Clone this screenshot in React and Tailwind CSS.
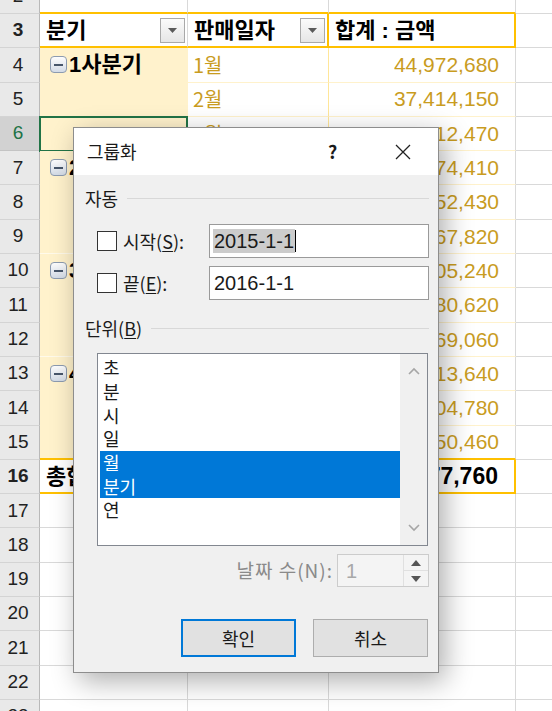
const SHEET_FONT = { fontFamily: '"Liberation Sans", "Noto Sans CJK KR", sans-serif' }
const DLG_FONT = { fontFamily: '"Noto Sans CJK KR", "Noto Sans", sans-serif' }

const rows = [
  { n: 4, q: '1사분기', m: '1월', v: '44,972,680' },
  { n: 5, m: '2월', v: '37,414,150' },
  { n: 6, m: '3월', v: '41,912,470', end: true },
  { n: 7, q: '2사분기', m: '4월', v: '43,574,410' },
  { n: 8, m: '5월', v: '39,252,430' },
  { n: 9, m: '6월', v: '40,867,820', end: true },
  { n: 10, q: '3사분기', m: '7월', v: '42,105,240' },
  { n: 11, m: '8월', v: '38,680,620' },
  { n: 12, m: '9월', v: '41,769,060', end: true },
  { n: 13, q: '4사분기', m: '10월', v: '45,213,640' },
  { n: 14, m: '11월', v: '36,904,780' },
  { n: 15, m: '12월', v: '40,250,460', end: true },
]

function RowHead({ n, active }) {
  return (
    <div
      className={
        'w-[40px] shrink-0 flex items-center justify-center pr-[3px] border-r border-b text-[19px] ' +
        (active
          ? 'bg-[#d2d2d2] border-r-[#217346] border-b-[#c4c4c4] text-[#217346]'
          : 'bg-[#e9e9e9] border-r-[#b9b9b9] border-b-[#d4d4d4] text-[#222]')
      }
    >
      {n}
    </div>
  )
}

function Dropdown() {
  return (
    <div className="ml-auto mr-[2px] w-[25px] h-[25px] border border-[#a9a9a9] bg-gradient-to-b from-[#fbfbfb] to-[#e6e6e6] flex items-center justify-center">
      <svg width="9" height="5" viewBox="0 0 9 5">
        <path d="M0 0h9L4.5 5z" fill="#5a5a5a" />
      </svg>
    </div>
  )
}

function Collapse() {
  return (
    <div className="w-[17px] h-[17px] shrink-0 rounded-[4px] border border-[#8c9bb0] bg-gradient-to-b from-[#fdfdfd] to-[#d3dbe6] flex items-center justify-center">
      <div className="w-[9px] h-[2px] bg-[#47566a]" />
    </div>
  )
}

function EmptyRow({ n }) {
  return (
    <div className="flex h-[34.3px]">
      <RowHead n={n} />
      <div className="w-[148px] shrink-0 border-r border-b border-[#d9d9d9]" />
      <div className="w-[141px] shrink-0 border-r border-b border-[#d9d9d9]" />
      <div className="w-[187px] shrink-0 border-r border-b border-[#d9d9d9]" />
      <div className="flex-1 border-b border-[#d9d9d9]" />
    </div>
  )
}

function Sheet() {
  return (
    <div className="flex flex-col mt-[-20.3px] text-[21px]" style={SHEET_FONT}>
      {/* row 2 */}
      <div className="flex h-[34.3px]">
        <RowHead n={2} />
        <div className="w-[148px] shrink-0 border-r border-r-[#d9d9d9] border-b-2 border-b-[#ffc000]" />
        <div className="w-[141px] shrink-0 border-r border-r-[#d9d9d9] border-b-2 border-b-[#ffc000]" />
        <div className="w-[187px] shrink-0 border-r border-r-[#d9d9d9] border-b-2 border-b-[#ffc000]" />
        <div className="flex-1 border-b border-[#d9d9d9]" />
      </div>
      {/* row 3 header */}
      <div className="flex h-[34.3px] font-bold text-[22px]">
        <RowHead n={3} />
        <div className="w-[148px] shrink-0 flex items-center pl-[6px] border-r border-r-[#d9d9d9] border-b-2 border-b-[#ffc000]">
          분기
          <Dropdown />
        </div>
        <div className="w-[141px] shrink-0 flex items-center pl-[6px] border-r-2 border-r-[#ffc000] border-b-2 border-b-[#ffc000]">
          판매일자
          <Dropdown />
        </div>
        <div className="w-[187px] shrink-0 flex items-center pl-[6px] border-r-2 border-r-[#ffc000] border-b-2 border-b-[#ffc000]">
          합계 : 금액
        </div>
        <div className="flex-1 border-b border-[#d9d9d9]" />
      </div>
      {rows.map((r) => (
        <div key={r.n} className="flex h-[34.3px]">
          <RowHead n={r.n} active={r.n === 6} />
          <div
            className={
              'relative w-[148px] shrink-0 bg-[#fff2cc] flex items-center pl-[10px] gap-[2px] font-bold text-[22px] border-r border-r-[#fff2cc] ' +
              (r.n === 15
                ? 'border-b-2 border-b-[#ffc000]'
                : r.end
                ? 'border-b border-b-[#fffaea]'
                : 'border-b border-b-[#fff2cc]')
            }
          >
            {r.q ? (
              <>
                <Collapse />
                <span>{r.q}</span>
              </>
            ) : null}
            {r.n === 6 ? (
              <div className="absolute left-[-1px] top-[-1px] right-[-1px] bottom-[-2px] border-2 border-[#217346]" />
            ) : null}
          </div>
          <div
            className={
              'w-[141px] shrink-0 flex items-center pl-[5px] text-[#c99c1f] border-r border-r-[#ffe699] ' +
              (r.n === 15 ? 'border-b-2 border-b-[#ffc000]' : 'border-b border-b-[#fff2cc]')
            }
            style={{ fontFamily: '"Noto Sans CJK KR", sans-serif', fontSize: '20px' }}
          >
            {r.m}
          </div>
          <div
            className={
              'w-[187px] shrink-0 flex items-center justify-end pr-[16px] text-[#c99c1f] border-r border-r-[#d9d9d9] ' +
              (r.n === 15 ? 'border-b-2 border-b-[#ffc000]' : 'border-b border-b-[#fff2cc]')
            }
          >
            {r.v}
          </div>
          <div className="flex-1 border-b border-[#d9d9d9]" />
        </div>
      ))}
      {/* row 16 total */}
      <div className="flex h-[34.3px] font-bold">
        <RowHead n={16} />
        <div className="w-[148px] shrink-0 flex items-center pl-[6px] text-[22px] border-b-2 border-b-[#ffc000]">
          총합계
        </div>
        <div className="w-[141px] shrink-0 border-r-2 border-r-[#ffc000] border-b-2 border-b-[#ffc000]" />
        <div className="w-[187px] shrink-0 flex items-center justify-end pr-[16px] text-[23px] border-r-2 border-r-[#ffc000] border-b-2 border-b-[#ffc000]">
          491,177,760
        </div>
        <div className="flex-1 border-b border-[#d9d9d9]" />
      </div>
      {[17, 18, 19, 20, 21, 22, 23].map((n) => (
        <EmptyRow key={n} n={n} />
      ))}
    </div>
  )
}

function Checkbox() {
  return <div className="w-[20px] h-[20px] shrink-0 border border-[#333] bg-white" />
}

function Chevron({ up }) {
  return (
    <svg width="12" height="8" viewBox="0 0 12 8">
      <path
        d={up ? 'M1 7L6 2l5 5' : 'M1 1l5 5 5-5'}
        fill="none"
        stroke="#a6a6a6"
        strokeWidth="1.6"
      />
    </svg>
  )
}

function Dialog() {
  const units = ['초', '분', '시', '일', '월', '분기', '연']
  return (
    <div
      className="absolute left-[73px] top-[127px] w-[366px] h-[546px] border border-[#8d8d8d] bg-[#f0f0f0] flex flex-col text-[18px] text-[#1a1a1a] shadow-[6px_8px_26px_rgba(0,0,0,0.32)]"
      style={DLG_FONT}
    >
      <div className="relative h-[47px] bg-white flex items-center pl-[13px]">
        <span>그룹화</span>
        <span className="absolute left-[254px] top-[10px] font-bold text-[18px]">?</span>
        <svg className="absolute left-[321px] top-[16px]" width="16" height="16" viewBox="0 0 16 16">
          <path d="M1 1l14 14M15 1L1 15" stroke="#222" strokeWidth="1.3" />
        </svg>
      </div>
      <div className="flex flex-col pl-[11px] pr-[9px]">
        <div className="mt-[11px] h-[24px] flex items-center">
          <span>자동</span>
          <div className="ml-[9px] flex-1 h-px bg-[#d8d8d8]" />
        </div>
        <div className="mt-[14px] h-[34px] flex items-center pl-[12px]">
          <Checkbox />
          <span className="ml-[6px]">
            시작(<span className="underline underline-offset-2">S</span>):
          </span>
          <div className="ml-auto w-[220px] h-[34px] border border-[#9a9a9a] bg-white flex items-center pl-[3px] text-[20px]" style={SHEET_FONT}>
            <span className="bg-[#cccccc] px-[1px] leading-[24px]">2015-1-1</span>
            <span className="w-px h-[22px] bg-black" />
          </div>
        </div>
        <div className="mt-[8px] h-[34px] flex items-center pl-[12px]">
          <Checkbox />
          <span className="ml-[6px]">
            끝(<span className="underline underline-offset-2">E</span>):
          </span>
          <div className="ml-auto w-[220px] h-[34px] border border-[#9a9a9a] bg-white flex items-center pl-[4px] text-[20px]" style={SHEET_FONT}>
            2016-1-1
          </div>
        </div>
        <div className="mt-[16px] h-[24px] flex items-center">
          <span>
            단위(<span className="underline underline-offset-2">B</span>)
          </span>
          <div className="ml-[9px] flex-1 h-px bg-[#d8d8d8]" />
        </div>
        <div className="mt-[13px] ml-[12px] w-[331px] h-[193px] border border-[#828790] bg-white flex">
          <div className="flex-1 pt-[2px] pl-[2px]">
            {units.map((u) => {
              const sel = u === '월' || u === '분기'
              return (
                <div
                  key={u}
                  className={'h-[23.7px] flex items-center pl-[3px] ' + (sel ? 'bg-[#0078d7] text-white' : '')}
                >
                  {u}
                </div>
              )
            })}
          </div>
          <div className="w-[27px] bg-[#f0f0f0] flex flex-col items-center justify-between py-[13px]">
            <Chevron up />
            <Chevron />
          </div>
        </div>
        <div className="mt-[8px] h-[33px] flex items-center justify-end gap-[4px]">
          <span className="text-[#8a8a8a] text-[19px] tracking-[1px]">날짜 수(N):</span>
          <div className="w-[92px] h-[33px] border border-[#cccccc] bg-[#f4f4f4] flex">
            <div className="flex-1 flex items-center pl-[8px] text-[20px] text-[#a8a8a8]" style={SHEET_FONT}>
              1
            </div>
            <div className="w-[25px] flex flex-col border-l border-[#e0e0e0]">
              <div className="flex-1 flex items-center justify-center border-b border-[#e0e0e0]">
                <svg width="10" height="6" viewBox="0 0 10 6">
                  <path d="M0 6L5 0l5 6z" fill="#555" />
                </svg>
              </div>
              <div className="flex-1 flex items-center justify-center">
                <svg width="10" height="6" viewBox="0 0 10 6">
                  <path d="M0 0h10L5 6z" fill="#555" />
                </svg>
              </div>
            </div>
          </div>
        </div>
        <div className="mt-[32px] h-[38px] flex justify-end gap-[17px] pr-[1px]">
          <div className="w-[115px] h-[38px] border-2 border-[#0078d7] bg-[#e1e1e1] flex items-center justify-center">
            확인
          </div>
          <div className="w-[115px] h-[38px] border border-[#adadad] bg-[#e1e1e1] flex items-center justify-center">
            취소
          </div>
        </div>
      </div>
    </div>
  )
}

export default function App() {
  return (
    <div className="relative w-[552px] h-[711px] overflow-hidden bg-white text-black">
      <Sheet />
      <Dialog />
    </div>
  )
}
